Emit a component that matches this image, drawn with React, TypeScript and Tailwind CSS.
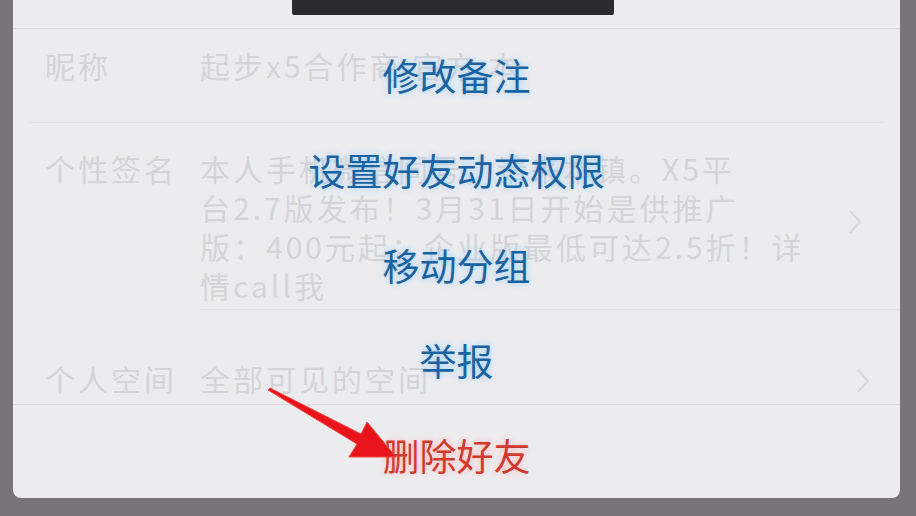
import React from 'react';

const menu = [
    { text: '修改备注', danger: false },
    { text: '设置好友动态权限', danger: false },
    { text: '移动分组', danger: false },
    { text: '举报', danger: false },
    { text: '删除好友', danger: true },
];

function Chevron() {
    return (
        <svg width="14" height="26" viewBox="0 0 14 26" className="shrink-0">
            <path d="M2 2 L12 13 L2 24" fill="none" stroke="#d6d6da" strokeWidth="2" />
        </svg>
    );
}

export default function App() {
    return (
        <div className="w-[916px] h-[516px] bg-[#77757a] flex overflow-hidden font-['Noto_Sans_CJK_SC','Noto_Sans',sans-serif]">
            <div className="ml-[13px] w-[887px] h-[498px] bg-[#ececef] rounded-b-[8px] relative flex flex-col">
                {/* top area with dark bar */}
                <div className="h-[29px] flex justify-center border-b border-[#d8d8dc] shrink-0">
                    <div className="w-[322px] h-[15px] bg-[#2a2a2f] rounded-b-[2px] ml-[-7px]" />
                </div>

                {/* faded profile rows behind */}
                <div className="flex h-[93px] items-start pt-[16px] text-[30px] tracking-[3px] leading-[40px] text-[#d4d4d8]">
                    <span className="w-[187px] pl-[32px]">昵称</span>
                    <span>起步x5合作商 官方 本</span>
                </div>
                <div className="mx-[16px] border-t border-[#e2e2e5]" />
                <div className="flex h-[186px] items-start pt-[26px] text-[30px] tracking-[3px] leading-[39px] text-[#d4d4d8]">
                    <span className="w-[187px] pl-[32px] shrink-0">个性签名</span>
                    <span className="w-[640px] whitespace-nowrap">
                        本人手机微信同号，请来本镇。X5平<br />
                        台2.7版发布！3月31日开始是供推广<br />
                        版：400元起；企业版最低可达2.5折！详<br />
                        情call我
                    </span>
                    <div className="pt-[60px] pl-[8px]"><Chevron /></div>
                </div>
                <div className="ml-[187px] border-t border-[#e2e2e5]" />
                <div className="flex h-[94px] items-end pb-[6px] text-[30px] tracking-[3px] leading-[40px] text-[#d4d4d8]">
                    <span className="w-[187px] pl-[32px] shrink-0">个人空间</span>
                    <span className="flex-1">全部可见的空间</span>
                    <div className="pr-[30px] pb-[4px]"><Chevron /></div>
                </div>
                <div className="border-t border-[#dcdce0]" />

                {/* action menu overlay */}
                <div className="absolute inset-x-0 top-[28px] flex flex-col pl-[4px] pr-[4px]">
                    {menu.map((m) => (
                        <div key={m.text} className="h-[95px] flex items-center justify-center">
                            <span
                                className={
                                    m.danger
                                        ? 'text-[37px] leading-none text-[#cf3a2e] [text-shadow:0_0_6px_rgba(255,175,175,0.9)]'
                                        : 'text-[37px] leading-none text-[#1b62a0] [text-shadow:0_0_6px_rgba(150,205,245,0.95)]'
                                }
                            >
                                {m.text}
                            </span>
                        </div>
                    ))}
                </div>

                {/* red arrow annotation */}
                <svg className="absolute left-[230px] top-[380px]" width="160" height="90" viewBox="0 0 160 90">
                    <polygon
                        points="25,10 27,8 118,54 124,42 153,77 106,77 114,64"
                        fill="#e8141a"
                        stroke="#f04848"
                        strokeWidth="1"
                    />
                </svg>
            </div>
        </div>
    );
}
